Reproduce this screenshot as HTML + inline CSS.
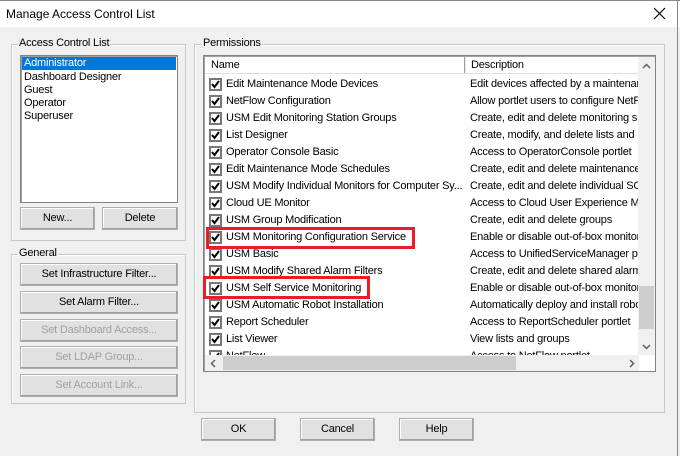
<!DOCTYPE html>
<html><head><style>
*{box-sizing:border-box;margin:0;padding:0}
body{width:680px;height:456px;background:#f0f0f0;font-family:"Liberation Sans",sans-serif;font-size:11px;letter-spacing:-0.2px;color:#000;position:relative;overflow:hidden}
.a{position:absolute}
.title{left:0;top:0;width:680px;height:27px;background:#fff;border-top:1px solid #888}
.title span{position:absolute;left:6px;top:6px;font-size:12px;letter-spacing:0}
.grp{border:1px solid #c8c8c8;box-shadow:inset 1px 1px 0 #fff}
.lbl{background:#f0f0f0;padding:0 1px}
.btn{background:#e1e1e1;border:1px solid #adadad;text-align:center;line-height:20px;box-shadow:inset -1px -1px 0 #a0a0a0,inset 1px 1px 0 #fff}
.dis{color:#a0a0a0}
.lb{background:#fff;border:1px solid #828282;box-shadow:inset 1px 1px 0 #a0a0a0}
.row{position:absolute;left:0;height:17px;width:440px;white-space:nowrap}
.cb{position:absolute;left:4px;top:2px;width:13px;height:13px;border:2px solid #777;background:#fff}
.cb svg{position:absolute;left:0;top:0}
.nm{position:absolute;left:21px;top:2px}
.ds{position:absolute;left:265px;top:2px;width:169px;overflow:hidden}
.red{border:3px solid #ec1c24}
</style></head><body>
<div class="a title"><span>Manage Access Control List</span>
<svg class="a" style="left:653px;top:6px" width="13" height="13"><path d="M1 1L12 12M12 1L1 12" stroke="#000" stroke-width="1.2"/></svg></div>
<div class="a" style="left:677px;top:0;width:1px;height:456px;background:#888"></div>

<div class="a grp" style="left:11px;top:44px;width:175px;height:197px"></div>
<div class="a lbl" style="left:18px;top:37px">Access Control List</div>
<div class="a lb" style="left:20px;top:55px;width:158px;height:148px">
<div style="background:#0078d7;color:#fff;margin:1px;padding-left:2px;height:13px;line-height:13px">Administrator</div>
<div style="padding-left:3px;line-height:13px">Dashboard Designer<br>Guest<br>Operator<br>Superuser</div>
</div>
<div class="a btn" style="left:20px;top:207px;width:75px;height:23px">New...</div>
<div class="a btn" style="left:102px;top:207px;width:76px;height:23px">Delete</div>

<div class="a grp" style="left:11px;top:254px;width:175px;height:150px"></div>
<div class="a lbl" style="left:18px;top:247px">General</div>
<div class="a btn" style="left:20px;top:263px;width:158px;height:23px">Set Infrastructure Filter...</div>
<div class="a btn" style="left:20px;top:291px;width:158px;height:23px">Set Alarm Filter...</div>
<div class="a btn dis" style="left:20px;top:319px;width:158px;height:23px">Set Dashboard Access...</div>
<div class="a btn dis" style="left:20px;top:346px;width:158px;height:23px">Set LDAP Group...</div>
<div class="a btn dis" style="left:20px;top:374px;width:158px;height:23px">Set Account Link...</div>

<div class="a grp" style="left:194px;top:44px;width:471px;height:369px"></div>
<div class="a lbl" style="left:202px;top:37px">Permissions</div>
<div class="a lb" style="left:203px;top:55px;width:453px;height:317px;overflow:hidden">
 <div class="a" style="left:1px;top:1px;width:434px;height:17px;background:#fff;border-bottom:1px solid #e0e0e0">
  <div class="a" style="left:6px;top:2px">Name</div>
  <div class="a" style="left:259px;top:0;width:1px;height:16px;background:#a0a0a0"></div>
  <div class="a" style="left:260px;top:0;width:1px;height:16px;background:#e5e5e5"></div>
  <div class="a" style="left:266px;top:2px">Description</div>
 </div>
 <div class="a" style="left:1px;top:20px;width:434px;height:280px;overflow:hidden">
  <div id="rows"></div>
 </div>
 <div class="a" style="left:434px;top:1px;width:17px;height:298px;background:#f0f0f0">
  <svg class="a" style="left:4px;top:6px" width="9" height="6"><path d="M1 5L4.5 1.5L8 5" stroke="#606060" stroke-width="1.5" fill="none"/></svg>
  <div class="a" style="left:1px;top:229px;width:15px;height:43px;background:#cdcdcd"></div>
  <svg class="a" style="left:4px;top:287px" width="9" height="6"><path d="M1 1L4.5 4.5L8 1" stroke="#606060" stroke-width="1.5" fill="none"/></svg>
 </div>
 <div class="a" style="left:1px;top:299px;width:434px;height:16px;background:#f0f0f0">
  <svg class="a" style="left:5px;top:4px" width="6" height="9"><path d="M5 1L1.5 4.5L5 8" stroke="#606060" stroke-width="1.5" fill="none"/></svg>
  <div class="a" style="left:18px;top:1px;width:293px;height:14px;background:#cdcdcd"></div>
  <svg class="a" style="left:424px;top:4px" width="6" height="9"><path d="M1 1L4.5 4.5L1 8" stroke="#606060" stroke-width="1.5" fill="none"/></svg>
 </div>
</div>
<div class="a red" style="left:206px;top:227px;width:209px;height:22px"></div>
<div class="a red" style="left:203px;top:276px;width:167px;height:23px"></div>

<div class="a btn" style="left:201px;top:418px;width:75px;height:23px">OK</div>
<div class="a btn" style="left:300px;top:418px;width:75px;height:23px">Cancel</div>
<div class="a btn" style="left:399px;top:418px;width:75px;height:23px">Help</div>

<script>
var d=[["Edit Maintenance Mode Devices","Edit devices affected by a maintenance"],["NetFlow Configuration","Allow portlet users to configure NetFlow"],["USM Edit Monitoring Station Groups","Create, edit and delete monitoring s"],["List Designer","Create, modify, and delete lists and"],["Operator Console Basic","Access to OperatorConsole portlet"],["Edit Maintenance Mode Schedules","Create, edit and delete maintenance"],["USM Modify Individual Monitors for Computer Sy...","Create, edit and delete individual SC"],["Cloud UE Monitor","Access to Cloud User Experience M"],["USM Group Modification","Create, edit and delete groups"],["USM Monitoring Configuration Service","Enable or disable out-of-box monitors"],["USM Basic","Access to UnifiedServiceManager p"],["USM Modify Shared Alarm Filters","Create, edit and delete shared alarm"],["USM Self Service Monitoring","Enable or disable out-of-box monitors"],["USM Automatic Robot Installation","Automatically deploy and install robot"],["Report Scheduler","Access to ReportScheduler portlet"],["List Viewer","View lists and groups"],["NetFlow","Access to NetFlow portlet"]];
var h="";d.forEach(function(r,i){h+='<div class="row" style="top:'+(i*17)+'px"><div class="cb"><svg width="9" height="9"><path d="M1 4 L3.5 7 L8 1" stroke="#000" stroke-width="2" fill="none"/></svg></div><div class="nm">'+r[0]+'</div><div class="ds">'+r[1]+'</div></div>';});
document.getElementById("rows").innerHTML=h;
</script>
</body></html>
